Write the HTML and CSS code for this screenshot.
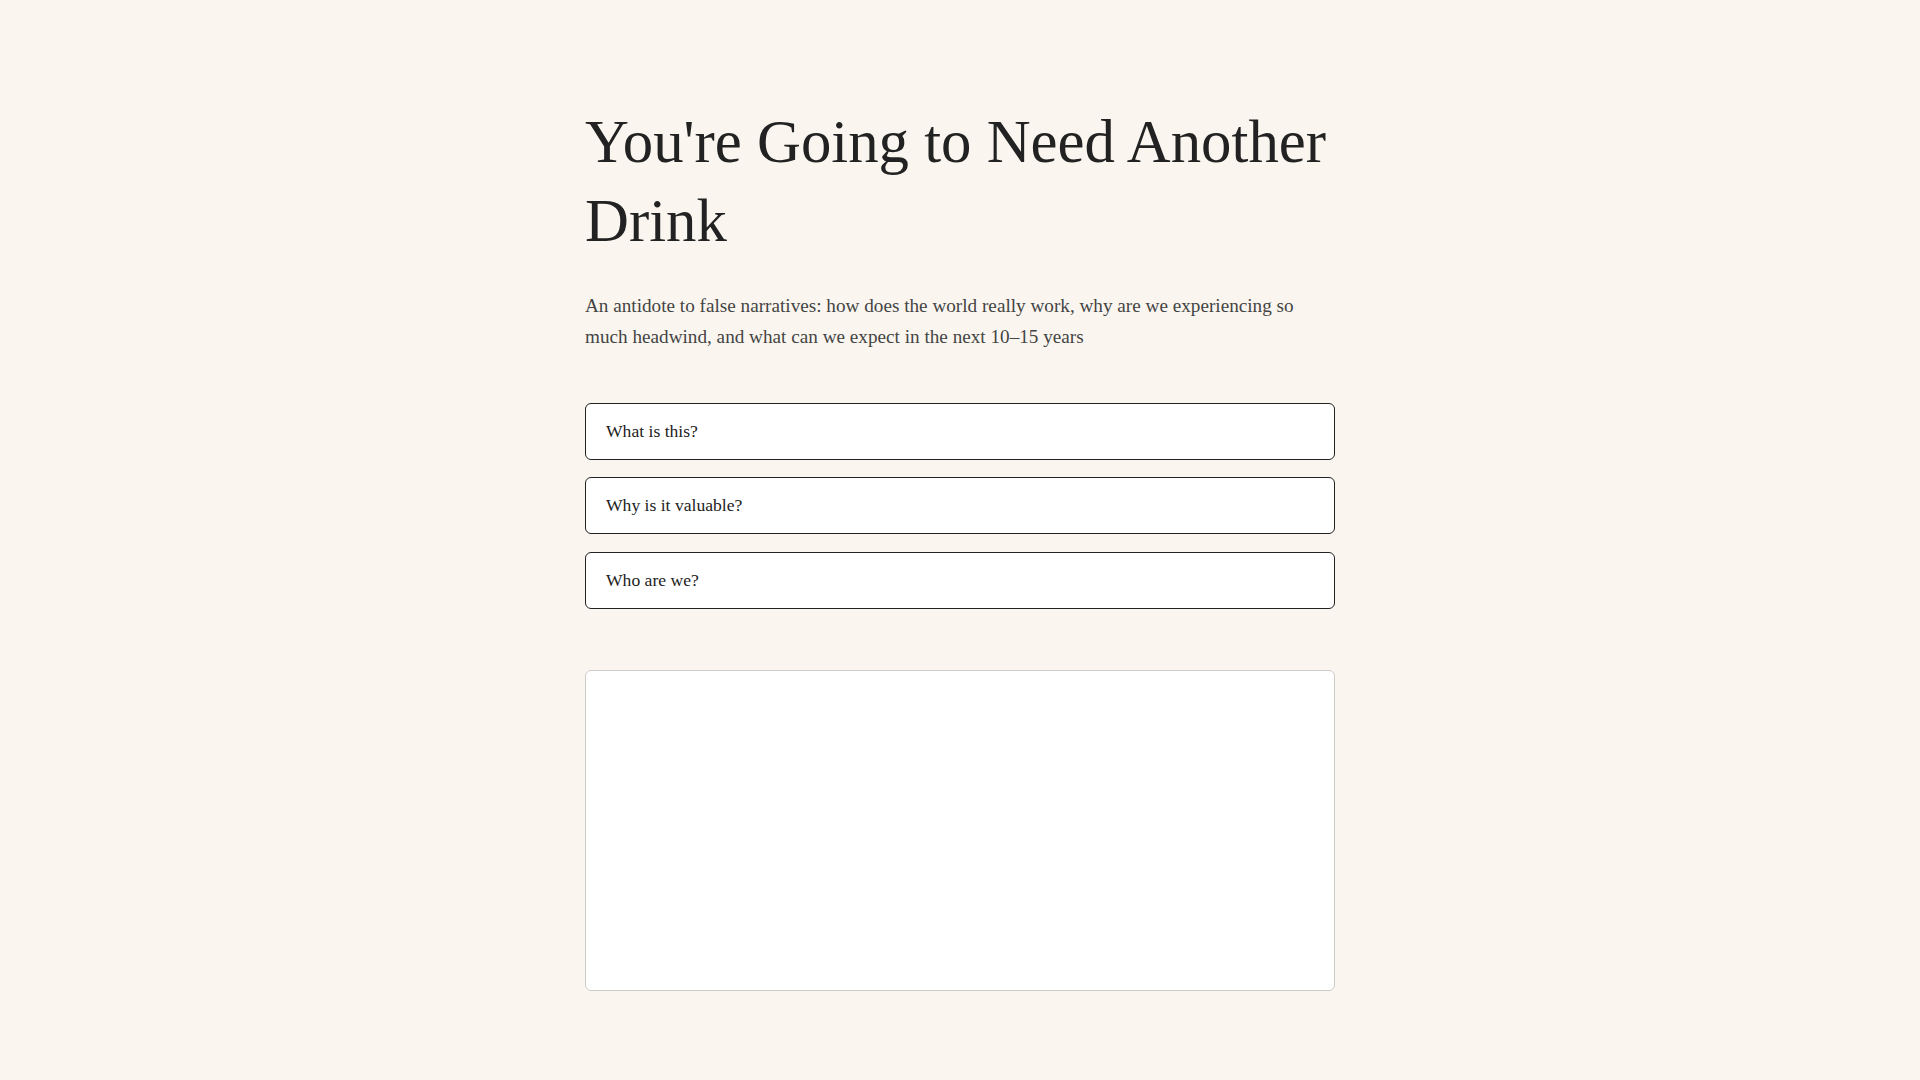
FILE: index.html
```html
<!DOCTYPE html>
<html lang="en">
<head>
    <meta charset="UTF-8">
    <meta name="viewport" content="width=device-width, initial-scale=1.0">
    <title>You're Going to Need Another Drink</title>
    <link rel="stylesheet" href="styles.css">
</head>
<body>

    <div class="container">
        <h1>You're Going to Need Another Drink</h1>

        <p class="intro">An antidote to false narratives: how does the world really work, why are we experiencing so much headwind, and what can we expect in the next 10–15 years</p>

        <div class="questions">
            <button class="question">What is this?</button>
            <button class="question">Why is it valuable?</button>
            <button class="question">Who are we?</button>
        </div>

        <div class="panel"></div>
    </div>

</body>
</html>
```

FILE: styles.css
```css
body {
    font-family: "Liberation Serif", "Times New Roman", serif;
    background: #faf6ef;
    color: #222;
    margin: 0;
    padding: 0;
}
.container {
    width: 750px;
    margin: 0 auto;
    padding: 102px 0 60px;
}
h1 {
    font-size: 60.8px;
    font-weight: normal;
    line-height: 1.3;
    margin: 0 0 31px;
}
.intro {
    font-size: 19.2px;
    line-height: 1.6;
    color: #444;
    margin: 0 0 50px;
}
.questions {
    display: flex;
    flex-direction: column;
    gap: 17.3px;
}
.question {
    display: block;
    width: 100%;
    padding: 16px 20px;
    line-height: 23.3px;
    text-align: left;
    font-family: inherit;
    font-size: 17.6px;
    color: #222;
    background: white;
    border: 1px solid #222;
    border-radius: 6px;
    cursor: pointer;
}
.panel {
    margin-top: 61px;
    height: 319.4px;
    background: white;
    border: 1px solid #ccc;
    border-radius: 6px;
}
```
